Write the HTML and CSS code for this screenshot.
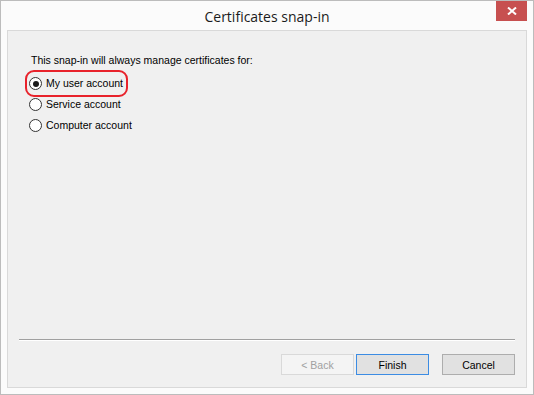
FILE: index.html
```html
<!DOCTYPE html>
<html>

<head>
    <link rel="stylesheet" href="styles.css">
</head>

<body>
    <div class="window">
        <div class="titlebar">
            <span class="title">Certificates snap-in</span>
            <div class="close">
                <svg width="10" height="8" viewBox="0 0 10 8">
                    <path d="M1 0.5 L9 7.5 M9 0.5 L1 7.5" stroke="#fff" stroke-width="2" fill="none" />
                </svg>
            </div>
        </div>

        <div class="panel">
            <div class="content">
                <p class="prompt">This snap-in will always manage certificates for:</p>
                <div class="options">
                    <label class="option selected">
                        <span class="radio checked"></span>My user account
                        <span class="highlight"></span>
                    </label>
                    <label class="option">
                        <span class="radio"></span>Service account
                    </label>
                    <label class="option">
                        <span class="radio"></span>Computer account
                    </label>
                </div>
            </div>

            <div class="footer">
                <div class="separator"></div>
                <div class="buttons">
                    <button class="btn disabled">&lt; Back</button>
                    <button class="btn default">Finish</button>
                    <button class="btn cancel">Cancel</button>
                </div>
            </div>
        </div>
    </div>
</body>

</html>
```

FILE: styles.css
```css
body {
    margin: 0;
    font-family: 'Liberation Sans', Arial, sans-serif;
}

.window {
    width: 534px;
    height: 395px;
    box-sizing: border-box;
    border: 1px solid #bcbcbc;
    background: #fbfbfb;
    padding: 0 6px 6px;
    display: flex;
    flex-direction: column;
}

.titlebar {
    height: 29px;
    display: flex;
    justify-content: center;
    position: relative;
}

.title {
    font-family: 'Open Sans', 'Noto Sans', sans-serif;
    font-size: 14px;
    color: #1b1b1b;
    line-height: 29px;
    padding-top: 1px;
}

.close {
    position: absolute;
    right: 0;
    top: 0;
    width: 31px;
    height: 20px;
    background: #c75050;
    display: flex;
    align-items: center;
    justify-content: center;
}

.panel {
    flex: 1;
    border: 1px solid #d9d9d9;
    background: #f0f0f0;
    display: flex;
    flex-direction: column;
}

.content {
    flex: 1;
    padding: 23px 0 0 23px;
    font-size: 10.5px;
    color: #000;
}

.prompt {
    margin: 0 0 10px;
    line-height: 13px;
}

.options {
    margin-left: -2px;
    display: flex;
    flex-direction: column;
    gap: 8px;
}

.option {
    display: flex;
    align-items: center;
    gap: 4px;
    height: 13px;
    line-height: 13px;
    position: relative;
    align-self: flex-start;
}

.radio {
    width: 11px;
    height: 11px;
    border: 1px solid #333;
    border-radius: 50%;
    background: #fff;
    display: flex;
    align-items: center;
    justify-content: center;
}

.radio.checked::after {
    content: "";
    width: 6px;
    height: 6px;
    border-radius: 50%;
    background: #1a1a1a;
}

.highlight {
    position: absolute;
    left: -4px;
    top: -7px;
    right: -5px;
    bottom: -7px;
    border: 2px solid #e8222b;
    border-radius: 9px;
}

.footer {
    padding: 0 11px 12px;
}

.separator {
    height: 1px;
    background: #a0a0a0;
    border-bottom: 1px solid #fff;
    margin-bottom: 13px;
}

.buttons {
    display: flex;
    justify-content: flex-end;
}

.btn {
    width: 73px;
    height: 21px;
    box-sizing: border-box;
    font-family: 'Liberation Sans', Arial, sans-serif;
    font-size: 10.5px;
    color: #000;
    border: 1px solid #adadad;
    background: #e1e1e1;
    padding: 0;
}

.btn.disabled {
    color: #a0a0a0;
    border-color: #d9d9d9;
    background: #f4f4f4;
    margin-right: 2px;
}

.btn.default {
    border-color: #3c8ce3;
    margin-right: 13px;
}
```
